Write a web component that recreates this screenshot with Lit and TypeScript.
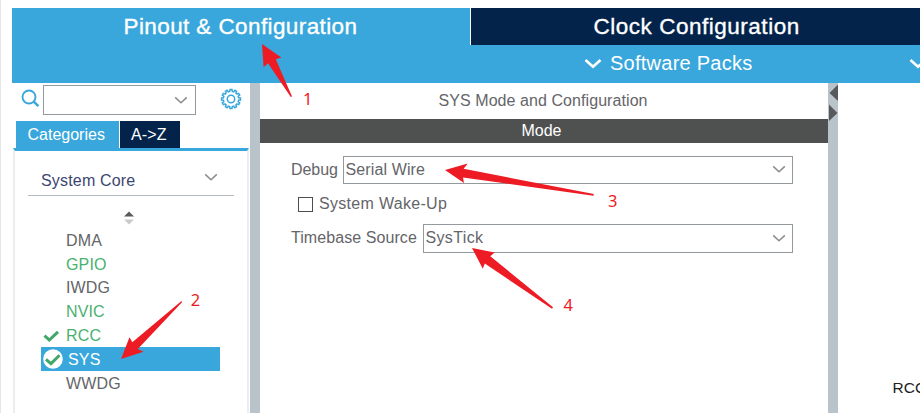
import { LitElement, html, css, svg } from "lit";
import { customElement } from "lit/decorators.js";
import { classMap } from "lit/directives/class-map.js";

interface Peripheral {
  name: string;
  state: "idle" | "on";
  check?: boolean;
  selected?: boolean;
}

const PERIPHERALS: Peripheral[] = [
  { name: "DMA", state: "idle" },
  { name: "GPIO", state: "on" },
  { name: "IWDG", state: "idle" },
  { name: "NVIC", state: "on" },
  { name: "RCC", state: "on", check: true },
  { name: "SYS", state: "on", check: true, selected: true },
  { name: "WWDG", state: "idle" },
];

const ARROWS = [
  "262,44 281.3,57.4 275.8,59.2 292,96.5 290.8,97 268,63.2 263.6,67.2",
  "121,359 129.5,337.2 132.3,342.3 181.5,301 182,302.3 137.8,349 143.5,351.8",
  "445,170 467.8,163.4 463.6,168.8 593.8,194 593.5,195.8 463,177.4 464,183",
  "472,248 494.6,252.6 490.3,256.3 553,307.2 552,308.8 484.8,263.5 482.8,268.7",
];

const NOTES = [
  { x: 303, y: 105, t: "1" },
  { x: 190.8, y: 306, t: "2" },
  { x: 608, y: 207.3, t: "3" },
  { x: 563.5, y: 311.3, t: "4" },
];

function gearPath(cx: number, cy: number, teeth: number, outer: number, inner: number): string {
  const pts: string[] = [];
  const step = (Math.PI * 2) / teeth;
  for (let i = 0; i < teeth; i++) {
    const a = i * step - Math.PI / 2;
    for (const [off, r] of [[-0.32, inner], [-0.2, outer], [0.2, outer], [0.32, inner]]) {
      pts.push(`${(cx + Math.cos(a + off * step) * r).toFixed(2)},${(cy + Math.sin(a + off * step) * r).toFixed(2)}`);
    }
  }
  return `M${pts.join("L")}Z`;
}

const chevron = html`<svg class="chev" width="14" height="9" viewBox="0 0 14 9"><path d="M1.2 1.4 7 6.8 12.8 1.4" /></svg>`;
const boldChevron = html`<svg class="bold" width="18" height="12" viewBox="0 0 18 12"><path d="M1.5 2 9 8.8 16.5 2" /></svg>`;

@customElement("app-root")
export class AppRoot extends LitElement {
  static styles = css`
    :host {
      display: block;
      position: relative;
      box-sizing: border-box;
      width: 920px;
      height: 413px;
      padding-top: 7.5px;
      overflow: hidden;
      background: #fff;
      border-left: 1px solid #e6e6e6;
      font: 16px "Liberation Sans", Arial, sans-serif;
      color: #646569;
      white-space: nowrap;
    }
    * { box-sizing: border-box; }
    svg { display: block; flex: none; }
    .header { margin-left: 11px; height: 75px; background: #39a7db; color: #fff; }
    .tabs { display: flex; height: 37.5px; font-size: 22.5px; line-height: 38px; -webkit-text-stroke: 0.35px #fff; }
    .tab { width: 457px; flex: none; padding-left: 111.5px; letter-spacing: 0.4px; }
    .tab.dark { width: 451px; margin-left: 0.5px; padding-left: 123px; background: #03234b; border-left: 1px solid #fff; letter-spacing: 0.52px; }
    .packs { display: flex; align-items: center; height: 37.5px; padding-left: 572px; font-size: 20px; line-height: 37px; letter-spacing: 0.25px; }
    .packs span { width: 307px; flex: none; padding-left: 8px; }
    .bold path { fill: none; stroke: #fff; stroke-width: 2.6; }
    .body { display: flex; height: 331px; }
    .side { width: 249px; flex: none; padding: 2.5px 0 0 12px; }
    .search { display: flex; align-items: flex-start; height: 36px; padding-left: 8px; }
    .lens { margin: 4px 3px 0 0; }
    .combo { display: flex; align-items: center; justify-content: space-between; border: 1px solid #94999e; background: #fff; }
    .search .combo { width: 153px; height: 30px; justify-content: flex-end; padding-right: 7px; }
    .gear { margin: 3px 0 0 24px; }
    .chev path { fill: none; stroke: #8c8c8c; stroke-width: 1.5; }
    .cats { display: flex; gap: 1px; height: 26.5px; padding-left: 3px; color: #fff; line-height: 27.6px; }
    .cat { width: 103px; padding-left: 11.5px; background: #39a7db; letter-spacing: 0; }
    .cat.dark { width: 60px; padding-left: 11px; background: #03234b; letter-spacing: 0.1px; }
    .tree { width: 236px; height: 266px; border: solid #ebeef0; border-width: 0 2px; border-top: 3.5px solid #39a7db; padding-left: 12.5px; }
    .group { display: flex; align-items: center; justify-content: space-between; width: 206.5px; height: 45px; padding: 17px 16px 0 13.5px; border-bottom: 1px solid #b4bcc2; color: #3c4670; letter-spacing: 0.18px; }
    .group .chev { margin-top: -7px; }
    .sort { margin: 15px 0 4px 95px; }
    .item { display: flex; align-items: center; width: 179px; height: 23.8px; margin-left: 13.5px; line-height: 23px; letter-spacing: 0.15px; }
    .item.on { color: #49b170; }
    .item.sel { background: #39a7db; color: #fff; }
    .mark { width: 25px; flex: none; padding-left: 2px; }
    .sel .mark { width: 27px; padding-left: 1.5px; }
    .split { width: 10px; flex: none; background: #b9c4ca; }
    .panel { width: 568px; flex: none; }
    .title { height: 36px; padding-left: 178.5px; line-height: 36px; letter-spacing: 0.07px; }
    .mode { height: 24px; background: #4f5150; color: #fff; text-align: center; line-height: 24px; padding-right: 5px; }
    .form { padding: 13px 0 0 31px; }
    .row { display: flex; align-items: center; height: 28.5px; }
    .row .combo { height: 28.5px; padding: 0 6px 0 2px; }
    .debug { letter-spacing: 0.12px; }
    .debug label { width: 51.5px; letter-spacing: -0.05px; }
    .debug .combo { width: 450.5px; }
    .wake { height: 40px; padding-left: 6.5px; gap: 6.5px; letter-spacing: 0.3px; }
    .box { width: 15px; height: 15px; border: 1px solid #4d4d4d; }
    .timebase label { width: 131.5px; letter-spacing: 0.07px; }
    .timebase .combo { width: 370.5px; letter-spacing: 0.35px; }
    .pins { flex: none; padding: 296.5px 0 0 54.5px; font-size: 15.5px; line-height: 18px; color: #222; }
    .notes { position: absolute; left: -1px; top: 0; fill: #ed1c24; font: 16.5px "Noto Sans", sans-serif; }
  `;

  private mark(p: Peripheral) {
    if (!p.check) return null;
    return p.selected
      ? html`<svg width="20" height="20" viewBox="0 0 20 20"><circle cx="10" cy="10" r="9.8" fill="#fff" /><path d="M3 10.3 8 14.6 16.5 6.2" fill="none" stroke="#3fa869" stroke-width="3" /></svg>`
      : html`<svg width="17" height="14" viewBox="0 0 17 14"><path d="M1.5 6.6 6.3 11 15 2.8" fill="none" stroke="#3fa869" stroke-width="3" /></svg>`;
  }

  render() {
    return html`
      <div class="header">
        <div class="tabs">
          <div class="tab">Pinout &amp; Configuration</div>
          <div class="tab dark">Clock Configuration</div>
        </div>
        <div class="packs">${boldChevron}<span>Software Packs</span>${boldChevron}</div>
      </div>
      <div class="body">
        <div class="side">
          <div class="search">
            <svg class="lens" width="19" height="19" viewBox="0 0 19 19" fill="none" stroke="#39a7db"><circle cx="8" cy="8" r="6.5" stroke-width="1.9" /><path d="M12.7 12.7 17.4 17.2" stroke-width="2.5" /></svg>
            <div class="combo">${chevron}</div>
            <svg class="gear" width="22" height="22" viewBox="0 0 22 22" fill="none" stroke="#39a7db" stroke-width="1.5"><path d=${gearPath(11, 11, 12, 9.5, 7.7)} /><circle cx="11" cy="11" r="3.7" /></svg>
          </div>
          <div class="cats">
            <div class="cat">Categories</div>
            <div class="cat dark">A-&gt;Z</div>
          </div>
          <div class="tree">
            <div class="group"><span>System Core</span>${chevron}</div>
            <svg class="sort" width="12" height="14" viewBox="0 0 12 14"><path d="M1 5.6 6 .4 11 5.6Z" fill="#58595b" /><path d="M1 8.4 6 13.4 11 8.4Z" fill="#c9cbcc" /></svg>
            ${PERIPHERALS.map(
              (p) => html`<div class=${classMap({ item: true, on: p.state === "on", sel: !!p.selected })}>
                <span class="mark">${this.mark(p)}</span>${p.name}
              </div>`,
            )}
          </div>
        </div>
        <div class="split"></div>
        <div class="panel">
          <div class="title">SYS Mode and Configuration</div>
          <div class="mode">Mode</div>
          <div class="form">
            <div class="row debug"><label>Debug</label><div class="combo">Serial Wire${chevron}</div></div>
            <div class="row wake"><span class="box"></span>System Wake-Up</div>
            <div class="row timebase"><label>Timebase Source</label><div class="combo">SysTick${chevron}</div></div>
          </div>
        </div>
        <div class="split">
          <svg width="10" height="40" viewBox="0 0 10 40" fill="#58595b"><path d="M10 1.5V18L1.5 10Z" /><path d="M1 21.5V38L9.5 30Z" /></svg>
        </div>
        <div class="pins">RCC</div>
      </div>
      <svg class="notes" width="920" height="413" viewBox="0 0 920 413">
        ${ARROWS.map((p) => svg`<polygon points=${p} />`)}
        ${NOTES.map((n) => svg`<text x=${n.x} y=${n.y}>${n.t}</text>`)}
      </svg>
    `;
  }
}
